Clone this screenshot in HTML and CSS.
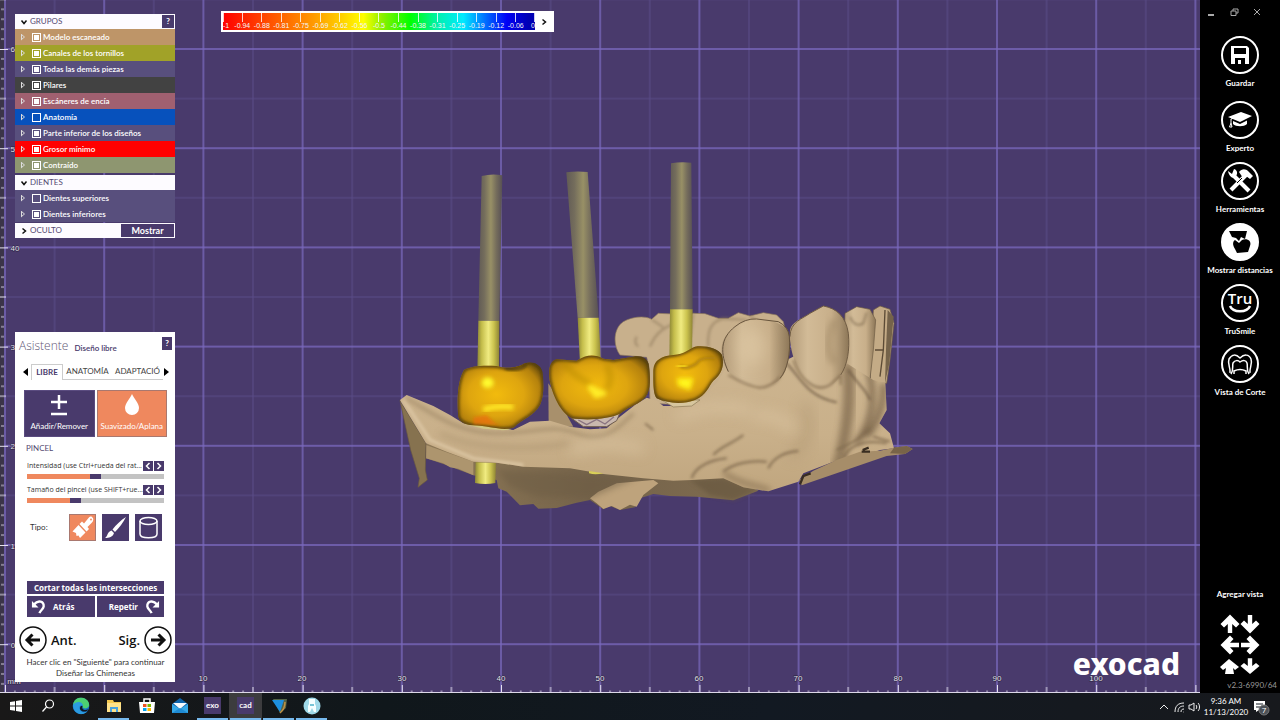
FILE: index.html
```html
<!DOCTYPE html>
<html lang="es">
<head>
<meta charset="utf-8">
<title>exocad</title>
<link rel="stylesheet" href="styles.css">
</head>
<body>
<div class="app">
<main class="viewport">
<svg class="scene" viewBox="0 0 1200 693" preserveAspectRatio="xMinYMin slice" aria-hidden="true">
<defs>
<pattern id="grid" x="5" y="49" width="99.2" height="99.2" patternUnits="userSpaceOnUse">
<path d="M49.6 0V99.2M0 49.6H99.2" stroke="#5a4c88" stroke-width="1"/>
<path d="M0 0V99.2M99.2 0V99.2M0 0H99.2M0 99.2H99.2" stroke="#7968bd" stroke-width="1.4"/>
</pattern>
<pattern id="rulerX" x="5" y="683" width="99.2" height="10" patternUnits="userSpaceOnUse">
<path d="M9.9 7.500V10M19.800 7.500V10M29.800 7.500V10M39.700 7.500V10M59.500 7.500V10M69.400 7.500V10M79.400 7.500V10M89.300 7.500V10" stroke="#d8d4e4"/>
<path d="M49.600 4V10M.5 2V10" stroke="#e6e2f0"/>
</pattern>
<pattern id="rulerY" x="0" y="49" width="10" height="99.2" patternUnits="userSpaceOnUse">
<path d="M1 9.900H4M1 19.800H4M1 29.800H4M1 39.700H4M1 59.500H4M1 69.400H4M1 79.400H4M1 89.300H4" stroke="#cfcadc"/>
<path d="M0 49.600H6M0 .5H8" stroke="#e6e2f0"/>
</pattern>
<linearGradient id="rodTop"><stop offset="0" stop-color="#615b55"/><stop offset=".25" stop-color="#746d5c"/><stop offset=".52" stop-color="#989066"/><stop offset=".75" stop-color="#756d5c"/><stop offset="1" stop-color="#575054"/></linearGradient>
<linearGradient id="rodLow"><stop offset="0" stop-color="#8d8737"/><stop offset=".2" stop-color="#c4bd4b"/><stop offset=".5" stop-color="#f0eb80"/><stop offset=".75" stop-color="#cbc34e"/><stop offset="1" stop-color="#8e8434"/></linearGradient>
<linearGradient id="gum" x1="0" y1="0" x2="0" y2="1"><stop offset="0" stop-color="#cdb590"/><stop offset=".6" stop-color="#c9b08a"/><stop offset="1" stop-color="#c0a67f"/></linearGradient>
<linearGradient id="tooth"><stop offset="0" stop-color="#b39b79"/><stop offset=".3" stop-color="#d2bb97"/><stop offset=".7" stop-color="#c8af8a"/><stop offset="1" stop-color="#8c7657"/></linearGradient>
<linearGradient id="under"><stop offset="0" stop-color="#8e7957"/><stop offset=".5" stop-color="#75634a"/><stop offset="1" stop-color="#7f6c50"/></linearGradient>
<radialGradient id="gold" cx=".45" cy=".48" r=".65"><stop offset="0" stop-color="#f2bb0d"/><stop offset=".5" stop-color="#dea50f"/><stop offset=".8" stop-color="#b5820d"/><stop offset="1" stop-color="#5a420c"/></radialGradient>
<filter id="s4" x="-50%" y="-50%" width="200%" height="200%"><feGaussianBlur stdDeviation="4"/></filter>
<filter id="s7" x="-50%" y="-50%" width="200%" height="200%"><feGaussianBlur stdDeviation="7"/></filter>
<filter id="s10" x="-50%" y="-50%" width="200%" height="200%"><feGaussianBlur stdDeviation="10"/></filter>
<filter id="s20" x="-50%" y="-50%" width="200%" height="200%"><feGaussianBlur stdDeviation="20"/></filter>
<path id="gumShape" d="M30 750L50 735L130 768L180 795L220 820L300 832L370 840L420 815L480 812L540 830L600 838L650 835L690 800L735 765L770 743L800 752L820 768L880 768L930 750L980 700L1010 650L1190 630L1250 600L1370 640L1450 690L1486 700L1490 780L1468 820L1500 850L1512 895L1470 900L1400 925L1330 935L1240 970L1225 995L1135 1024L1060 1012L1000 985L905 990L850 992L760 985L640 972L540 955L400 950L320 938L250 935L170 905L108 880L60 800Z"/>
<clipPath id="gumClip"><use href="#gumShape"/></clipPath>
<path id="tooth2" d="M1200 540C1205 515 1240 505 1260 490L1300 468C1340 475 1368 500 1375 550C1380 600 1372 645 1352 675C1330 715 1290 725 1260 705C1225 680 1195 600 1200 540Z"/>
<path id="crown1" d="M204 790C201 740 204 690 222 660C240 648 280 645 320 648C360 660 385 650 405 640C425 632 452 642 457 665C462 700 462 740 450 765C430 800 395 808 372 832C340 845 300 828 250 826C220 824 204 815 204 790Z"/>
<path id="crown2" d="M479 690C474 655 481 632 500 628L560 632C590 612 615 612 640 626L670 630L730 620C755 616 775 625 777 650C783 700 780 730 760 748C740 765 710 775 692 790C660 808 590 812 548 805C520 795 490 750 479 690Z"/>
<path id="crown3" d="M790 660C792 630 815 618 850 615C885 612 895 598 915 590C945 585 985 595 996 615C1005 650 992 675 970 692C955 710 950 735 915 750C880 764 830 760 800 745C788 730 790 690 790 660Z"/>
<clipPath id="c1"><use href="#crown1"/></clipPath>
<clipPath id="c2"><use href="#crown2"/></clipPath>
<clipPath id="c3"><use href="#crown3"/></clipPath>
</defs>
<rect width="1200" height="693" fill="#493a6c"/>
<rect width="1200" height="693" fill="url(#grid)"/>
<rect width="4" height="693" fill="#3b3448"/>
<rect width="10" height="693" fill="url(#rulerY)"/>
<rect x="5" y="683" width="1195" height="10" fill="url(#rulerX)"/>
<path d="M0 692.500H1200" stroke="#dcd8e8"/>

<g transform="translate(390 150) scale(.33333)" stroke-linejoin="round">
<!-- underside of the scan -->
<path d="M108 880V925L160 942L250 976L320 990L325 1015L350 1025L390 1066L430 1062L445 1076L500 1074L560 1058L600 1050L640 1078L660 1068L690 1080L735 1072L750 1045L790 1032L840 1038L920 1040L1030 1051L1105 1022L1000 950L300 900Z" fill="url(#under)"/>
<path d="M108 885V925L160 940L180 952L205 956L250 976V935Z" fill="#ad956e"/>
<path d="M600 1045L625 1025L680 1000L790 990L805 1000L760 1035L740 1070L720 1064L690 1080L665 1068L640 1077L620 1060Z" fill="#bea37c"/>
<path d="M320 960L520 970L740 985L600 1045L440 1040L360 1010Z" fill="#6b5a42" opacity=".45" filter="url(#s10)"/>
<path d="M900 990L1000 985L1100 1022L1030 1050L960 1035Z" fill="#65543c" opacity=".6" filter="url(#s7)"/>
<path d="M30 752L108 880L106 960L112 990L84 1012L88 985L62 900Z" fill="#86724f" stroke="#6a5940" stroke-width="2"/>
<path d="M475 700L500 740L550 830H476Z" fill="#a8906c"/>
<!-- rear teeth -->
<path d="M690 615C668 585 670 535 700 515C725 500 765 496 785 508L805 490L850 492L880 505L910 490L945 491L985 505L1015 505L1045 488L1080 498L1120 488L1160 495L1180 515L1200 600L1000 770L780 760L777 650L770 622Z" fill="#c8b08c" stroke="#8f7a5c" stroke-width="2"/>
<path d="M780 590C800 540 830 530 870 512M955 590C952 545 960 515 1000 505L1070 510M910 490L900 560M785 508L820 532M740 560Q730 580 745 590M1080 498L1110 520" fill="none" stroke="#8a7558" stroke-width="5" opacity=".75" filter="url(#s4)"/>
<!-- front teeth -->
<path d="M1440 700L1450 480L1470 468L1500 478L1512 520L1500 630L1490 700Z" fill="#c4ab86" stroke="#6c5a42" stroke-width="2"/>
<path d="M1493 480L1511 500L1498 640L1485 700L1488 600Z" fill="#75634a"/>
<path d="M1485 480L1480 600L1455 600M1480 600L1470 680" fill="none" stroke="#5c4b36" stroke-width="4"/>
<path d="M1365 490L1400 470L1440 478L1457 510L1450 600L1435 730L1360 690Z" fill="url(#tooth)" stroke="#6c5a42" stroke-width="2"/>
<path d="M1380 500Q1395 535 1420 520L1430 488" fill="none" stroke="#7c684d" stroke-width="4" filter="url(#s4)"/>
<!-- gum body -->
<use href="#gumShape" fill="url(#gum)"/>
<g clip-path="url(#gumClip)" fill="none">
<path d="M40 750L120 870L250 925L400 945" stroke="#dac4a1" stroke-width="10" filter="url(#s4)"/>
<path d="M50 745C130 790 200 850 320 850S480 820 560 850S680 840 730 790" stroke="#9d8665" stroke-width="10" filter="url(#s7)" opacity=".7"/>
<path d="M150 850C260 900 420 900 540 880" stroke="#a58d6a" stroke-width="14" filter="url(#s10)" opacity=".45"/>
<path d="M1372 640C1385 740 1370 860 1340 960" stroke="#7f694d" stroke-width="34" filter="url(#s10)" opacity=".75"/>
<path d="M1430 640C1460 730 1450 810 1400 880M1480 700C1485 770 1455 830 1430 860" stroke="#6d583f" stroke-width="16" filter="url(#s10)" opacity=".85"/>
<path d="M1190 640C1230 680 1250 740 1340 757M1375 660C1400 700 1430 720 1440 750" stroke="#6b5740" stroke-width="5" filter="url(#s4)"/>
<path d="M1240 760C1270 820 1260 880 1200 920" stroke="#a18865" stroke-width="20" filter="url(#s20)" opacity=".5"/>
<path d="M905 985C915 950 960 930 1010 925M1000 965C1030 940 1080 930 1130 935M1135 955C1150 920 1190 905 1225 903M970 915C990 890 1020 885 1060 855" stroke="#6d583f" stroke-width="6" filter="url(#s4)" opacity=".75"/>
<path d="M1000 968C1050 1004 1100 1005 1140 1022" stroke="#927a5a" stroke-width="14" filter="url(#s10)"/>
<path d="M860 800C950 760 1020 770 1080 780M1090 800C1120 790 1180 800 1210 840M540 900L650 880L760 895" stroke="#dbc5a2" stroke-width="28" filter="url(#s20)" opacity=".7"/>
<path d="M765 820L790 840M1340 900L1400 870L1440 835M1360 925C1380 880 1430 870 1490 880M1450 860L1500 875" stroke="#806a4e" stroke-width="5" filter="url(#s4)"/>
</g>
<use href="#tooth2" fill="url(#tooth)"/>
<path d="M1200 560C1200 515 1240 505 1260 490L1300 468C1340 475 1368 500 1375 550C1380 600 1372 645 1352 675" fill="none" stroke="#705c43" stroke-width="3"/>
<path d="M1210 630C1230 690 1280 730 1320 705L1352 675L1352 705" fill="none" stroke="#8c7556" stroke-width="6" filter="url(#s4)"/>
<path d="M1335 510C1310 560 1310 610 1335 640" fill="none" stroke="#a28a67" stroke-width="24" filter="url(#s10)" opacity=".6"/>
<path d="M995 590C1000 550 1030 535 1065 515C1090 498 1150 505 1190 535C1205 560 1202 610 1190 650C1180 690 1150 710 1110 708C1070 710 1035 695 1015 665C1000 645 992 620 995 590Z" fill="url(#tooth)"/>
<path d="M1015 665C990 610 990 565 1035 530Q1065 505 1100 507L1165 515Q1195 530 1198 560C1202 610 1192 660 1170 685" fill="none" stroke="#66533c" stroke-width="3"/>
<path d="M1015 675C1050 695 1080 710 1110 713Q1150 710 1170 680" fill="none" stroke="#8c7556" stroke-width="6" filter="url(#s4)"/>
<ellipse cx="1085" cy="590" rx="40" ry="55" fill="#dfc9a5" opacity=".6" filter="url(#s20)"/>
<path d="M1512 893L1550 888L1568 897L1545 912L1490 918L1235 1006L1228 990L1270 962L1340 930L1410 905L1470 902Z" fill="#a68d69"/>
<path d="M1512 893L1550 888L1568 897L1545 912L1500 910Z" fill="#786448"/>
<path d="M1230 1003L1240 978L1262 970M1418 900L1436 893M1415 905H1440" fill="none" stroke="#392d21" stroke-width="7"/>
<!-- screw channels -->
<path d="M275 78Q306 70 337 76L328 512H265Z" fill="url(#rodTop)"/>
<path d="M265 512H328L327 665H262Z" fill="url(#rodLow)"/>
<path d="M257 937L318 939L316 999Q286 1005 255 999Z" fill="url(#rodLow)"/>
<path d="M597 963L640 970Q615 976 597 970Z" fill="#d9cf58"/>
<path d="M529 67Q560 62 593 66L626 503H563Z" fill="url(#rodTop)"/>
<path d="M563 503H626L633 640H570Z" fill="url(#rodLow)"/>
<path d="M843 40Q870 35 904 38L908 478H840Z" fill="url(#rodTop)"/>
<path d="M840 478H908L906 630H838Z" fill="url(#rodLow)"/>
<!-- crowns -->
<path d="M225 822L280 824L365 838L340 841L280 836Z" fill="#d0c784"/>
<path d="M545 805L690 788L680 812L650 830H580Z" fill="#c9b8ae" stroke="#705d4c" stroke-width="3"/>
<path d="M565 810L590 824L620 808L645 822L672 800" fill="none" stroke="#8a7480" stroke-width="4"/>
<path d="M815 750L930 750L905 768L850 771Z" fill="#d7c69e" stroke="#8a7754" stroke-width="2"/>
<use href="#crown1" fill="url(#gold)"/>
<g clip-path="url(#c1)" fill="none">
<use href="#crown1" stroke="#553f10" stroke-width="10" filter="url(#s4)"/>
<path d="M345 655Q390 665 410 645" stroke="#3d2e0d" stroke-width="7" filter="url(#s4)"/>
<ellipse cx="293" cy="698" rx="18" ry="16" fill="#fffb2e" filter="url(#s7)"/>
<path d="M280 780C310 768 340 768 370 771" stroke="#ffe925" stroke-width="17" filter="url(#s7)"/>
<path d="M250 802L290 796L315 820L335 826L250 823Z" fill="#ed6d0a" opacity=".7" filter="url(#s4)"/>
</g>
<use href="#crown2" fill="url(#gold)"/>
<g clip-path="url(#c2)" fill="none">
<use href="#crown2" stroke="#553f10" stroke-width="10" filter="url(#s4)"/>
<path d="M520 635Q550 680 600 700M650 640Q670 690 650 720" stroke="#b78a0f" stroke-width="10" filter="url(#s10)"/>
<path d="M600 712L642 730L618 738Z" fill="#fff72a" stroke="#ffec27" stroke-width="14" filter="url(#s7)"/>
</g>
<use href="#crown3" fill="url(#gold)"/>
<g clip-path="url(#c3)" fill="none">
<use href="#crown3" stroke="#553f10" stroke-width="10" filter="url(#s4)"/>
<path d="M870 648Q890 660 920 640Q930 620 975 625" stroke="#a87c0b" stroke-width="8" filter="url(#s4)"/>
<path d="M865 688H905L898 715L868 705Z" fill="#fffb20" stroke="#ffec16" stroke-width="10" filter="url(#s7)"/>
<path d="M860 650L890 648" stroke="#ffe21a" stroke-width="9" filter="url(#s4)"/>
</g>
</g>
<g class="ruler-text">
<text x="203" y="681">10</text><text x="302" y="681">20</text><text x="402" y="681">30</text><text x="501" y="681">40</text><text x="600" y="681">50</text><text x="699" y="681">60</text><text x="798" y="681">70</text><text x="898" y="681">80</text><text x="997" y="681">90</text><text x="1096" y="681">100</text>
<text x="15" y="52">60</text><text x="15" y="152">50</text><text x="15" y="251">40</text><text x="15" y="350">30</text><text x="15" y="449">20</text><text x="15" y="549">10</text><text x="13" y="648">0</text><text x="14" y="684">mm</text>
</g>
</svg>

<div class="left">
<section class="groups">
<header class="group-head"><svg class="chev" viewBox="0 0 8 8"><path d="M1.500 2.500L4 5.500L6.500 2.500"/></svg><h2>GRUPOS</h2><button class="help">?</button></header>
<div class="row tan"><button class="twist" aria-label="Expandir"></button><input type="checkbox" id="g1" checked><label for="g1">Modelo escaneado</label></div>
<div class="row olive"><button class="twist" aria-label="Expandir"></button><input type="checkbox" id="g2" checked><label for="g2">Canales de los tornillos</label></div>
<div class="row"><button class="twist" aria-label="Expandir"></button><input type="checkbox" id="g3" checked><label for="g3">Todas las demás piezas</label></div>
<div class="row dark"><button class="twist" aria-label="Expandir"></button><input type="checkbox" id="g4" checked><label for="g4">Pilares</label></div>
<div class="row rose"><button class="twist" aria-label="Expandir"></button><input type="checkbox" id="g5" checked><label for="g5">Escáneres de encía</label></div>
<div class="row blue"><button class="twist" aria-label="Expandir"></button><input type="checkbox" id="g6"><label for="g6">Anatomía</label></div>
<div class="row"><button class="twist" aria-label="Expandir"></button><input type="checkbox" id="g7" checked><label for="g7">Parte inferior de los diseños</label></div>
<div class="row red"><button class="twist" aria-label="Expandir"></button><input type="checkbox" id="g8" checked><label for="g8">Grosor mínimo</label></div>
<div class="row sage"><button class="twist" aria-label="Expandir"></button><input type="checkbox" id="g9" checked><label for="g9">Contraído</label></div>
<header class="group-head spaced"><svg class="chev" viewBox="0 0 8 8"><path d="M1.500 2.500L4 5.500L6.500 2.500"/></svg><h2>DIENTES</h2></header>
<div class="row"><button class="twist" aria-label="Expandir"></button><input type="checkbox" id="d1"><label for="d1">Dientes superiores</label></div>
<div class="row"><button class="twist" aria-label="Expandir"></button><input type="checkbox" id="d2" checked><label for="d2">Dientes inferiores</label></div>
<header class="group-head spaced"><svg class="chev" viewBox="0 0 8 8"><path d="M2.500 1.500L5.500 4L2.500 6.500"/></svg><h2>OCULTO</h2><button class="show">Mostrar</button></header>
</section>

<section class="wizard">
<header class="wizard-head"><h1>Asistente</h1><span>Diseño libre</span><button class="help">?</button></header>
<nav class="tabs">
<button class="tab-arrow" aria-label="Anterior"><svg viewBox="0 0 5 8"><path d="M5 0V8L0 4Z"/></svg></button>
<button class="tab active">LIBRE</button><button class="tab">ANATOMÍA</button><button class="tab last">ADAPTACIÓ</button>
<button class="tab-arrow" aria-label="Siguiente"><svg viewBox="0 0 5 8"><path d="M0 0V8L5 4Z"/></svg></button>
</nav>
<div class="modes">
<button class="mode"><svg viewBox="0 0 24 24"><path d="M12 2V16M4 9H20M4 21H20" fill="none" stroke="#fff" stroke-width="2.500"/></svg>Añadir/Remover</button>
<button class="mode on"><svg viewBox="0 0 24 24"><path d="M12 1C14 6 19 10 19 15A7 7 0 0 1 5 15C5 10 10 6 12 1Z" fill="#fff"/></svg>Suavizado/Aplana</button>
</div>
<h3>PINCEL</h3>
<div class="slider">
<div class="slider-top"><label for="s1">Intensidad (use Ctrl+rueda del rat...</label><button aria-label="Menos"><svg viewBox="0 0 10 10"><path d="M6.500 2L3.500 5L6.500 8"/></svg></button><button aria-label="Más"><svg viewBox="0 0 10 10"><path d="M3.500 2L6.500 5L3.500 8"/></svg></button></div>
<input type="range" id="s1" value="50" class="fill-a">
</div>
<div class="slider">
<div class="slider-top"><label for="s2">Tamaño del pincel (use SHIFT+rue...</label><button aria-label="Menos"><svg viewBox="0 0 10 10"><path d="M6.500 2L3.500 5L6.500 8"/></svg></button><button aria-label="Más"><svg viewBox="0 0 10 10"><path d="M3.500 2L6.500 5L3.500 8"/></svg></button></div>
<input type="range" id="s2" value="34" class="fill-b">
</div>
<div class="types"><span>Tipo:</span>
<button class="type on" aria-label="Brocha"><svg viewBox="0 0 27 27"><path d="M23 3C25 4.500 24.500 7 23 8.500L18.500 13L20 15L17.500 17.500L10.500 10L13 7.500L15 9.500L19.500 4C21 2.500 22 2.300 23 3Z" fill="#fff"/><path d="M9.500 11L16.500 18.500L11 24L9.500 21.500L7.500 22L7 19L3.500 17.500Z" fill="#fff"/><circle cx="22" cy="5.500" r=".9" fill="#ef885e"/></svg></button>
<button class="type" aria-label="Pincel"><svg viewBox="0 0 27 27"><path d="M24 3C21 9 17 14 13 18L10.500 15.500C14 11 19 6 24 3ZM9.500 16.500L12 19C11 23 7 24 3 24C6 22 5 18 9.500 16.500Z" fill="#fff"/></svg></button>
<button class="type" aria-label="Cilindro"><svg viewBox="0 0 27 27"><path d="M5 7V20C5 25 22 25 22 20V7" fill="none" stroke="#fff" stroke-width="1.500"/><ellipse cx="13.500" cy="7" rx="8.500" ry="3.500" fill="none" stroke="#fff" stroke-width="1.500"/></svg></button>
</div>
<div class="actions">
<button class="cut">Cortar todas las intersecciones</button>
<button class="undo"><svg viewBox="0 0 16 16"><path d="M3 6C8 0 14 3 13.500 8C13 11 10 12 9 15" fill="none" stroke="#fff" stroke-width="2.500"/><path d="M1 2V9H8Z" fill="#fff"/></svg>Atrás</button>
<button class="undo redo">Repetir<svg viewBox="0 0 16 16"><path d="M13 6C8 0 2 3 2.500 8C3 11 6 12 7 15" fill="none" stroke="#fff" stroke-width="2.500"/><path d="M15 2V9H8Z" fill="#fff"/></svg></button>
</div>
<div class="steps">
<button><svg viewBox="0 0 28 28"><circle cx="14" cy="14" r="13" fill="none" stroke="#111" stroke-width="1.500"/><path d="M21 14H9M13.500 8.500L8 14L13.500 19.500" fill="none" stroke="#111" stroke-width="3"/></svg>Ant.</button>
<button>Sig.<svg viewBox="0 0 28 28"><circle cx="14" cy="14" r="13" fill="none" stroke="#111" stroke-width="1.500"/><path d="M7 14H19M14.500 8.500L20 14L14.500 19.500" fill="none" stroke="#111" stroke-width="3"/></svg></button>
</div>
<p class="hint">Hacer clic en "Siguiente" para continuar<br>Diseñar las Chimeneas</p>
</section>
</div>

<div class="palette">
<div class="spectrum"><ol><li>-1</li><li>-0.94</li><li>-0.88</li><li>-0.81</li><li>-0.75</li><li>-0.69</li><li>-0.62</li><li>-0.56</li><li>-0.5</li><li>-0.44</li><li>-0.38</li><li>-0.31</li><li>-0.25</li><li>-0.19</li><li>-0.12</li><li>-0.06</li><li>0</li></ol></div>
<button aria-label="Expandir escala"><svg class="chev" viewBox="0 0 8 8"><path d="M2.500 1.500L5.500 4L2.500 6.500"/></svg></button>
</div>
<div class="brand">exocad</div>
</main>

<aside class="side">
<div class="window-buttons">
<button aria-label="Minimizar"><svg viewBox="0 0 10 10"><path d="M2 8H8" stroke-width="2"/></svg></button>
<button aria-label="Restaurar"><svg viewBox="0 0 10 10"><path d="M2 4H7V8.500H2ZM4 4V2H9V6H7"/></svg></button>
<button aria-label="Cerrar"><svg viewBox="0 0 10 10"><path d="M2 2L8 8M8 2L2 8"/></svg></button>
</div>
<button class="tool first"><svg viewBox="0 0 38 38"><circle cx="19" cy="19" r="18"/><path class="solid" d="M10 10H26L28 12V28H10ZM13 12V18H25V12ZM14 22V28H17V24H20V28H24V22Z" fill-rule="evenodd"/></svg>Guardar</button>
<button class="tool"><svg viewBox="0 0 38 38"><circle cx="19" cy="19" r="18"/><path class="solid" d="M7 16L20 11L31 15L19 21ZM12 20L19 23L26 19.500V23C23 26 15 26 12 23Z"/><path d="M19 15L10 18V22M10 22L8.500 26H11L10 22" stroke-width="1"/></svg>Experto</button>
<button class="tool"><svg viewBox="0 0 38 38"><circle cx="19" cy="19" r="18"/><path d="M12 13L28 29" stroke-width="4"/><path d="M25 13L10 28" stroke-width="4"/><path class="solid" d="M7 9L11 12L13 7C17 8 17 13 14 15S8 14 7 9ZM18 10C21 6 25 7 27 9L32 14L29 17L25 14L22 16Z"/><path d="M16 21L21 16" stroke="#000" stroke-width="1"/></svg>Herramientas</button>
<button class="tool"><svg viewBox="0 0 38 38"><circle cx="19" cy="19" r="18" fill="#fff"/><path d="M8 8H26L24 16L20 14L18 18L15 15L11 14Z" fill="#000" stroke="none"/><path d="M14 17L18 20L21 17C26 15 31 18 29 23L27 29L16 30L14 26C12 23 11 19 14 17Z" fill="#000" stroke="none"/></svg>Mostrar distancias</button>
<button class="tool"><svg viewBox="0 0 38 38"><circle cx="19" cy="19" r="18"/><text x="19" y="20">Tru</text><path d="M9 22C12 29 26 29 29 22" stroke-width="2.500"/></svg>TruSmile</button>
<button class="tool"><svg viewBox="0 0 38 38"><circle cx="19" cy="19" r="18"/><path d="M9 28C10 23 6 19 8 14C11 9 15 9 19 13C23 9 28 9 30 14C32 19 28 23 29 28" stroke-width="1.500"/><path d="M10 29C13 25 11 21 12 18C14 15 17 15 19 17C22 15 25 15 26 18C27 21 25 25 28 29M13 29V26C17 24 21 24 25 26V29" stroke-width="1.500"/></svg>Vista de Corte</button>
<div class="view-add"><span>Agregar vista</span>
<svg viewBox="0 0 42 62"><defs><path id="arrow" d="M0-9.500L9.500 0L6 3.500L2.200 0V9H-2.200V0L-6 3.500L-9.500 0Z"/></defs><g fill="#fff"><use href="#arrow" transform="translate(11 10)"/><use href="#arrow" transform="translate(31 10) rotate(180)"/><use href="#arrow" transform="translate(11 31) rotate(-90)"/><use href="#arrow" transform="translate(31 31) rotate(90)"/><path d="M10 45L20 53L16 56L14 54L15 60H6L7 54L4 56L1 53Z"/><use href="#arrow" transform="translate(31 52) rotate(180) scale(1 .85)"/></g></svg>
</div>
<span class="version">v2.3-6990/64</span>
</aside>
</div>

<footer class="taskbar">
<button class="task start" aria-label="Inicio"><svg viewBox="0 0 18 18"><path d="M3 5L8 4.200V8.500H3ZM9 4L15 3V8.500H9ZM3 9.500H8V13.800L3 13ZM9 9.500H15V15L9 14Z" fill="#fff"/></svg></button>
<button class="task" aria-label="Buscar"><svg viewBox="0 0 18 18"><circle cx="10.500" cy="7" r="4" fill="none" stroke="#fff" stroke-width="1.200"/><path d="M7.500 10L3.500 14.500" stroke="#fff" stroke-width="1.200"/></svg></button>
<button class="task" aria-label="Edge"><svg viewBox="0 0 18 18"><circle cx="9" cy="9" r="8.300" fill="#1670c5"/><path d="M1 8C2 2 6 .5 10 .8C15 1 18 6 17 9C16 12 11 12 10.500 10C12 6 6 4 1 8Z" fill="#4ccf72"/><path d="M1 8C4 4 10 4 11 8.500C8 7 6 11 9 14C11 16 14 15 15.500 14C11 20 1 17 1 8Z" fill="#2b9be0"/><path d="M10.500 9C9 13 14 14 16 12L15 14C10 16 6 12 9 9Z" fill="#101820"/></svg></button>
<button class="task open" aria-label="Explorador"><svg viewBox="0 0 18 18"><path d="M2 3H8L9 5H16V15H2Z" fill="#f4c84f"/><path d="M2 6H16V15H2Z" fill="#ffe28a"/><path d="M5 10H13V15H11V12H7V15H5Z" fill="#49a2de"/></svg></button>
<button class="task" aria-label="Tienda"><svg viewBox="0 0 18 18"><path d="M6 5V2H12V5" fill="none" stroke="#fff" stroke-width="1.500"/><path d="M1 5H17L16 16H2Z" fill="#fff"/><path d="M5 7H8.500V10H5Z" fill="#f05022"/><path d="M9.500 7H13V10H9.500Z" fill="#7db900"/><path d="M5 11H8.500V14H5Z" fill="#00a3ee"/><path d="M9.500 11H13V14H9.500Z" fill="#fdb800"/></svg></button>
<button class="task" aria-label="Correo"><svg viewBox="0 0 18 18"><path d="M1 7L9 1L17 7V16H1Z" fill="#0f65ad"/><path d="M1 7L9 12L17 7V16H1Z" fill="#35a8e7"/><path d="M2 6H16L9 12Z" fill="#f6fbff"/><path d="M1 16L9 11L17 16Z" fill="#1f8bd4"/></svg></button>
<button class="task open"><span class="badge">exo</span></button>
<button class="task open current"><span class="badge">cad</span></button>
<button class="task open" aria-label="Visor"><svg viewBox="0 0 18 18"><path d="M3 2L17 2L16 11L10 16Z" fill="#546348"/><path d="M2 3L14 3L10 15Z" fill="#1d8fe0"/><path d="M15 5Q15 12 10 16" fill="none" stroke="#c09144" stroke-width="1.500"/></svg></button>
<button class="task open" aria-label="Dental"><svg viewBox="0 0 18 18"><circle cx="9" cy="9" r="8.500" fill="#9fd9e8"/><path d="M6 2H12V7L13 9V15H11L9 11L7 15H5V9L6 7Z" fill="#f5ffff"/><path d="M7 8H11" stroke="#4cb2c9" stroke-width="1.500"/></svg></button>
<div class="tray">
<button aria-label="Mostrar iconos"><svg viewBox="0 0 12 12"><path d="M2 8L6 4L10 8"/></svg></button>
<button aria-label="Red"><svg viewBox="0 0 12 12"><path d="M2 11C2 5 5 2 11 2M5 11C5 7 7 5 11 5M8 11C8 9 9 8 11 8M10.500 11H11"/></svg></button>
<button aria-label="Volumen"><svg viewBox="0 0 12 12"><path d="M1 4H3L6 2V10L3 8H1ZM8 4C9 5 9 7 8 8M10 2C12 4 12 8 10 10"/></svg></button>
<time>9:36 AM<br>11/13/2020</time>
<button class="notice" aria-label="Notificaciones"><svg viewBox="0 0 18 18"><path d="M2 3H13V12H7L4 14V12H2Z" fill="#fff" stroke="none"/><path d="M4 6H11M4 9H11" stroke="#111820"/><circle cx="12" cy="12" r="5" fill="#4b5056" stroke="#777"/><text x="12" y="15">7</text></svg></button>
</div>
</footer>
</body>
</html>
```

FILE: styles.css
```css
* { box-sizing: border-box; }
body {
  margin: 0;
  height: 100vh;
  display: flex;
  flex-direction: column;
  overflow: hidden;
  background: #000;
  font-family: Lato, "Open Sans", sans-serif;
  font-size: 8px;
  line-height: 11px;
}
button {
  border: 0;
  padding: 0;
  background: none;
  color: inherit;
  font: inherit;
  display: flex;
  align-items: center;
  justify-content: center;
  white-space: nowrap;
}
h1, h2, h3, p, ol { margin: 0; padding: 0; font-size: inherit; font-weight: 400; }
svg { display: block; flex: none; }

.app { flex: 1; min-height: 0; display: flex; }
.viewport {
  position: relative;
  flex: 1;
  min-width: 0;
  display: flex;
  align-items: stretch;
  gap: 46px;
  padding: 11px 0 11px 15px;
  background: #493a6c;
}
.scene { position: absolute; inset: 0; width: 100%; height: 100%; }
.ruler-text text {
  font: 8px "Liberation Sans", sans-serif;
  fill: #e6e2ee;
  text-anchor: middle;
  paint-order: stroke;
  stroke: #2b2340;
  stroke-width: 1px;
}
.left {
  position: relative;
  width: 160px;
  padding-top: 3px;
  display: flex;
  flex-direction: column;
  justify-content: space-between;
}

/* object groups */
.group-head {
  display: flex;
  align-items: center;
  height: 15px;
  padding-left: 4px;
  background: #fdfbff;
  border: 1px solid #fdfbff;
  color: #554a72;
}
.group-head h2 { flex: 1; padding-left: 2px; }
.spaced { margin-top: 2px; }
.row + .spaced:last-child { margin-top: 1px; }
.chev { width: 8px; height: 8px; fill: none; stroke: #111; stroke-width: 1.5; }
.help { width: 12px; height: 13px; background: #493a6c; color: #fff; font-weight: 700; }
.show { width: 53px; height: 13px; background: #493a6c; color: #fff; font-weight: 700; font-size: 9px; }
.row { display: flex; align-items: center; height: 16px; padding-left: 6px; background: #584f7d; color: #fff; font-weight: 600; }
.tan { background: #be9568; }
.olive { background: #a1a228; }
.dark { background: #424242; }
.rose { background: #a06070; }
.blue { background: #0751bc; }
.red { background: #f00; }
.sage { background: #8e9670; }
.twist { width: 11px; height: 16px; justify-content: flex-start; }
.twist::before {
  content: "";
  width: 4px;
  height: 7px;
  background: #ddd;
  clip-path: polygon(0 0, 100% 50%, 0 100%, 0 0, 1px 2px, 1px 5px, 3px 50%, 1px 2px);
}
.row input { appearance: none; width: 9px; height: 9px; margin: 0 2px 0 0; padding: 1px; border: 1px solid #fff; background-clip: content-box; }
.row input:checked { background-color: #fff; }

/* wizard */
.wizard { padding: 5px 3px 3px 4px; background: #fff; color: #333; }
.wizard-head { display: flex; align-items: center; height: 18px; gap: 6px; }
.wizard-head h1 { font-family: "Open Sans", sans-serif; font-size: 12px; line-height: 18px; color: #5f5775; font-weight: 300; }
.wizard-head span { flex: 1; padding-top: 4px; color: #493a6c; font-weight: 600; }
.wizard-head .help { width: 10px; align-self: flex-start; }
.tabs { display: flex; align-items: stretch; height: 16px; margin-top: 9px; padding: 0 2px 0 3px; }
.tab-arrow { width: 7px; }
.tab-arrow svg { width: 5px; height: 8px; }
.tab { flex: 1 1 44px; border-bottom: 1px solid #ccc; color: #444; }
.tab.active { flex: 0 0 32px; margin-left: 2px; border: 1px solid #ccc; border-bottom: 0; color: #493a6c; font-weight: 700; }
.tab.last { flex: 1 1 46px; }
.modes { display: grid; grid-template-columns: 1fr 1fr; gap: 2px; margin: 10px 5px 0 5px; }
.mode { height: 47px; flex-direction: column; justify-content: flex-start; gap: 4px; padding-top: 2px; background: #493a6c; border: 1px solid #5b4c80; color: #fff; }
.mode svg { width: 24px; height: 24px; }
.mode.on, .type.on { background: #ef885e; border: 1px solid #a9786f; }
.wizard h3 { margin: 6px 0 6px 7px; color: #554a72; }
.slider { margin: 0 8px 3px; }
.slider-top { display: flex; align-items: center; gap: 1px; height: 11px; margin-bottom: 3px; }
.slider-top label { flex: 1; min-width: 0; white-space: nowrap; font-family: "Open Sans", sans-serif; font-size: 7px; }
.slider-top button, .slider-top svg { width: 10px; height: 10px; background: #493a6c; fill: none; stroke: #fff; stroke-width: 1.5; }
.slider input { appearance: none; display: block; width: 100%; height: 5px; margin: 0 0 5px; }
.slider input::-webkit-slider-thumb { appearance: none; width: 11px; height: 5px; background: #493a6c; }
.fill-a { background: linear-gradient(90deg, #ef885e 50%, #c3c3c3 50%); }
.fill-b { background: linear-gradient(90deg, #ef885e 35%, #c3c3c3 35%); }
.types { display: flex; align-items: center; gap: 6px; margin: 11px 10px 0 11px; }
.types span { flex: 1; }
.type { width: 27px; height: 27px; background: #493a6c; }
.type svg { width: 27px; height: 27px; }
.actions { display: grid; grid-template-columns: 1fr 1fr; gap: 2px; margin: 40px 8px 0; }
.actions button { background: #493a6c; color: #fff; font: 700 8px/11px "Open Sans", sans-serif; }
.cut { grid-column: 1 / -1; height: 13px; }
.undo { height: 21px; gap: 7px; padding: 0 4px; }
.actions .undo { justify-content: flex-start; }
.actions .redo { justify-content: flex-end; }
.undo svg { width: 15px; height: 15px; }
.steps { display: flex; justify-content: space-between; margin-top: 9px; }
.steps button { gap: 4px; color: #111; font: 600 13px/18px "Open Sans", sans-serif; }
.steps svg { width: 28px; height: 28px; }
.hint { margin-top: 3px; text-align: center; white-space: nowrap; }

/* distance scale */
.palette { position: relative; align-self: flex-start; display: flex; width: 333px; height: 21px; padding: 2px; background: #fff; }
.spectrum {
  flex: 1;
  overflow: hidden;
  background: linear-gradient(90deg, #f00 0%, #ff4b00 14%, #ff9a00 29%, #ffd000 38%, #ff0 45%, #8cf000 51%, #0f0 60%, #00f0b0 69%, #00eaff 77%, #0070ff 84%, #0000f5 91%, #0000b4 98%);
}
.spectrum ol { display: grid; grid-template-columns: repeat(17, minmax(0, 1fr)); margin: 0 -10px; list-style: none; color: #f4f4f4; font: 7px/8px "Liberation Sans", sans-serif; }
.spectrum li { display: flex; flex-direction: column; align-items: center; }
.spectrum li::before { content: ""; width: 1px; height: 9px; background: #ffffffcc; }
.spectrum li:first-child { align-items: flex-start; padding-left: 10px; }
.spectrum li:last-child { align-items: flex-end; padding-right: 10px; }
.palette button { width: 17px; }

.brand {
  position: absolute;
  right: 20px;
  bottom: 9px;
  color: #fff;
  font: 800 30px/40px "Noto Sans", sans-serif;
}

/* right toolbar */
.side { width: 80px; display: flex; flex-direction: column; align-items: center; background: #000; color: #fff; font-weight: 700; }
.window-buttons { display: flex; gap: 13px; margin: 7px 12px 0 0; }
.window-buttons svg { width: 10px; height: 10px; fill: none; stroke: #aaa; stroke-width: 1; }
.tool { flex-direction: column; gap: 3px; margin-bottom: 8px; line-height: 12px; }
.first { margin: 19px 0 12px; }
.tool svg { width: 38px; height: 38px; fill: none; stroke: #fff; stroke-width: 2; }
.tool .solid { fill: #fff; stroke: none; }
.tool text { font: 600 15px "Open Sans", sans-serif; fill: #fff; stroke: none; text-anchor: middle; }
.view-add { display: flex; flex-direction: column; align-items: center; gap: 14px; margin-top: auto; }
.view-add svg { width: 42px; height: 62px; }
.version { align-self: flex-end; margin: 4px 3px 2px 0; color: #999; font-weight: 400; }

/* taskbar */
.taskbar { display: flex; height: 27px; background: linear-gradient(90deg, #191818, #10171b 30%, #121922 60%, #17191d); color: #fff; }
.task { width: 33px; border-bottom: 2px solid transparent; }
.start { width: 31px; }
.task svg { width: 18px; height: 18px; }
.open { border-image: linear-gradient(90deg, transparent 10%, #76b9ed 10% 90%, transparent 90%) 2; border-width: 0 0 2px; border-style: solid; }
.current { background: #3c3c3e; }
.badge { width: 17px; padding: 2px 0; line-height: 13px; background: #493a6c; font-weight: 700; }
.tray { margin-left: auto; display: flex; align-items: center; gap: 3px; padding-right: 10px; }
.tray svg { width: 12px; height: 12px; fill: none; stroke: #eee; stroke-width: 1; }
.tray time { width: 46px; text-align: center; }
.tray .notice svg { width: 18px; height: 18px; }
.tray text { font: 8px "Open Sans", sans-serif; fill: #fff; stroke: none; text-anchor: middle; }
```
